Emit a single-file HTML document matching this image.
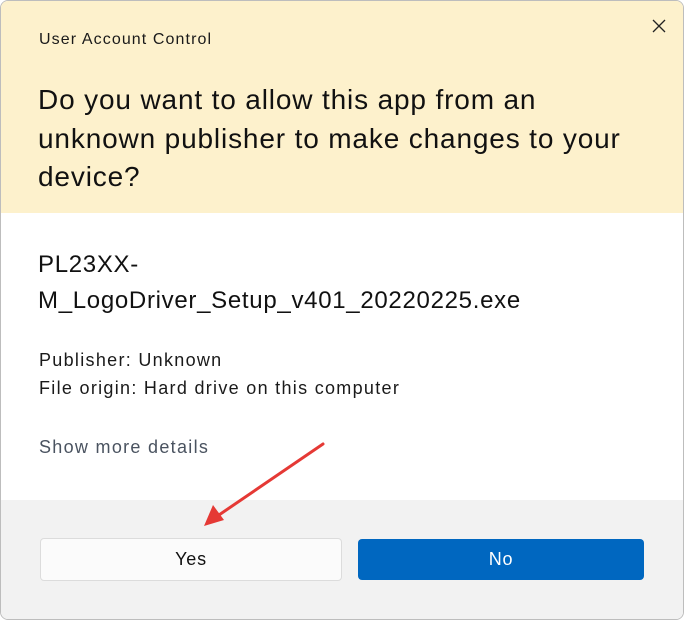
<!DOCTYPE html>
<html><head><style>
html,body{margin:0;padding:0;width:684px;height:620px;overflow:hidden;background:#fff;font-family:"Liberation Sans",sans-serif;}
.win{position:absolute;left:0;top:0;width:682px;height:618px;border:1px solid #bdbdbd;border-radius:8px;overflow:hidden;background:#fff;}
.top{position:absolute;left:0;top:0;width:100%;height:212px;background:#fdf1cc;}
.t{position:absolute;left:38px;top:30px;font-size:16px;color:#1a1a1a;letter-spacing:1.1px;}
.x{position:absolute;left:650px;top:17px;}
.h{position:absolute;left:37px;top:80px;font-size:28px;line-height:38.5px;color:#111;letter-spacing:0.85px;white-space:nowrap;}
.f{position:absolute;left:37px;top:246px;font-size:24px;line-height:36px;color:#111;letter-spacing:0.7px;}
.p{position:absolute;left:38px;top:345px;font-size:18px;line-height:28px;color:#1a1a1a;letter-spacing:1.3px;}
.s{position:absolute;left:38px;top:436px;font-size:18px;color:#4a5360;letter-spacing:1.3px;}
.foot{position:absolute;left:0;top:499px;width:100%;height:125px;background:#f2f2f2;}
.b{position:absolute;box-sizing:border-box;border-radius:4px;font-size:18px;text-align:center;letter-spacing:0.8px;}
.yes{left:39px;top:537px;width:302px;height:43px;line-height:41px;background:#fbfbfb;border:1px solid #dcdcdc;color:#111;}
.no{left:357px;top:538px;width:286px;height:41px;line-height:41px;background:#0067c0;color:#fff;}
</style></head><body>
<div class="win">
<div class="top"></div>
<div class="t">User Account Control</div>
<svg class="x" width="16" height="16" viewBox="0 0 16 16"><path d="M2 2L14 14M14 2L2 14" stroke="#222" stroke-width="1.3"/></svg>
<div class="h">Do you want to allow this app from an<br>unknown publisher to make changes to your<br>device?</div>
<div class="f">PL23XX-<br>M_LogoDriver_Setup_v401_20220225.exe</div>
<div class="p">Publisher: Unknown<br>File origin: Hard drive on this computer</div>
<div class="s">Show more details</div>
<div class="foot"></div>
<div class="b yes">Yes</div>
<div class="b no">No</div>
<svg style="position:absolute;left:0;top:0" width="684" height="620"><line x1="322" y1="443" x2="215" y2="516" stroke="#e53935" stroke-width="3" stroke-linecap="round"/><polygon points="203,525 212,504 223,519" fill="#e53935"/></svg>
</div>
</body></html>
